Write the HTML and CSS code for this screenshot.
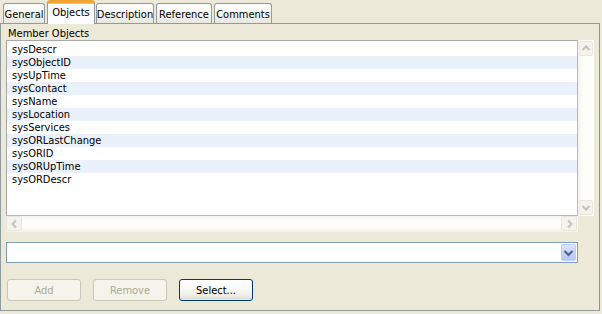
FILE: index.html
```html
<!DOCTYPE html>
<html>
<head>
<meta charset="utf-8">
<link rel="stylesheet" href="styles.css">
</head>
<body>
<div class="tabs">
  <div class="tab t-general">General</div>
  <div class="tab selected t-objects">Objects</div>
  <div class="tab t-desc">Description</div>
  <div class="tab t-ref">Reference</div>
  <div class="tab t-comm">Comments</div>
</div>
<div class="panel">
  <div class="label">Member Objects</div>
  <div class="scrollpane">
    <div class="list">
      <div class="row">sysDescr</div>
      <div class="row alt">sysObjectID</div>
      <div class="row">sysUpTime</div>
      <div class="row alt">sysContact</div>
      <div class="row">sysName</div>
      <div class="row alt">sysLocation</div>
      <div class="row">sysServices</div>
      <div class="row alt">sysORLastChange</div>
      <div class="row">sysORID</div>
      <div class="row alt">sysORUpTime</div>
      <div class="row">sysORDescr</div>
    </div>
    <div class="vscroll">
      <div class="sbtn"><svg width="14" height="15" viewBox="0 0 14 15"><polyline points="3.5,9 7,5.5 10.5,9" fill="none" stroke="#c3c3bb" stroke-width="2"/></svg></div>
      <div class="sbtn"><svg width="14" height="15" viewBox="0 0 14 15"><polyline points="3.5,6 7,9.5 10.5,6" fill="none" stroke="#c3c3bb" stroke-width="2"/></svg></div>
    </div>
    <div class="hscroll">
      <div class="sbtn h"><svg width="15" height="14" viewBox="0 0 15 14"><polyline points="9,3.5 5.5,7 9,10.5" fill="none" stroke="#c3c3bb" stroke-width="2"/></svg></div>
      <div class="sbtn h"><svg width="15" height="14" viewBox="0 0 15 14"><polyline points="6,3.5 9.5,7 6,10.5" fill="none" stroke="#c3c3bb" stroke-width="2"/></svg></div>
    </div>
    <div class="corner"></div>
  </div>
  <div class="combo">
    <div class="combo-field"></div>
    <div class="combo-btn"><svg width="15" height="19" viewBox="0 0 15 19"><polyline points="3.5,8 7.5,12 11.5,8" fill="none" stroke="#4d6185" stroke-width="2"/></svg></div>
  </div>
  <div class="buttons">
    <div class="btn disabled">Add</div>
    <div class="btn disabled">Remove</div>
    <div class="btn default">Select...</div>
  </div>
</div>
</body>
</html>
```

FILE: styles.css
```css
html, body {
  margin: 0;
  padding: 0;
}
body {
  width: 602px;
  height: 314px;
  background: #ece9d8;
  font-family: "DejaVu Sans Condensed", "Liberation Sans", sans-serif;
  font-size: 11px;
  color: #000;
  overflow: hidden;
}
.tabs {
  display: flex;
  align-items: flex-end;
  height: 23px;
  padding-left: 3px;
  gap: 2px;
  position: relative;
  z-index: 2;
}
.tab {
  box-sizing: border-box;
  height: 20px;
  border: 1px solid #919b9c;
  border-bottom: none;
  border-radius: 3px 3px 0 0;
  background: linear-gradient(#ffffff, #f3f3ef 60%, #e7e6df);
  display: flex;
  align-items: center;
  justify-content: center;
  padding-top: 1px;
}
.t-general { width: 42px; }
.t-objects { width: 48px; }
.t-desc { width: 58px; }
.t-ref { width: 56px; }
.t-comm { width: 58px; }
.tab.selected {
  height: 24px;
  margin-bottom: -1px;
  margin-right: -1px;
  background: #fcfcfe;
  border-top: 3px solid #f1a531;
  box-shadow: inset 0 1px 0 #ffc83c;
  padding-top: 0;
  padding-bottom: 3px;
}
.panel {
  box-sizing: border-box;
  width: 600px;
  height: 288px;
  border: 1px solid #919b9c;
  border-right-color: #8a9294;
  padding: 0 5px;
  display: flex;
  flex-direction: column;
  position: relative;
  z-index: 1;
}
.label {
  height: 16px;
  line-height: 14px;
  padding-left: 2px;
  padding-top: 3px;
  box-sizing: border-box;
}
.scrollpane {
  display: grid;
  grid-template-columns: 572px 16px;
  grid-template-rows: 176px 16px;
}
.list {
  box-sizing: border-box;
  border: 1px solid #a7a6aa;
  border-color: #a7a6aa #b8b8b0 #b8b8b0 #a7a6aa;
  background: #fff;
  padding-top: 2px;
}
.row {
  height: 13px;
  line-height: 13px;
  padding-left: 5px;
}
.row.alt {
  background: #ebf1fb;
}
.vscroll {
  background: linear-gradient(90deg, #f4f3ee, #fdfdfa 30%, #fefefd);
  display: flex;
  flex-direction: column;
  justify-content: space-between;
  padding: 1px;
}
.hscroll {
  background: linear-gradient(#f4f3ee, #fdfdfa 30%, #fefefd 60%, #f3f2ec);
  display: flex;
  justify-content: space-between;
  padding: 0 1px 0 0;
}
.sbtn {
  box-sizing: border-box;
  width: 14px;
  height: 15px;
  border: 1px solid #e8e6de;
  border-radius: 2px;
  background: #f4f3ee;
  display: flex;
  align-items: center;
  justify-content: center;
}
.sbtn svg { display: block; margin: -1px; }
.sbtn.h {
  width: 16px;
  height: 15px;
}
.corner {
  background: #ece9d8;
}
.combo {
  margin-top: 10px;
  width: 572px;
  height: 21px;
  box-sizing: border-box;
  border: 1px solid #7f9db9;
  background: #fff;
  display: flex;
  justify-content: flex-end;
  padding: 1px;
}
.combo-btn {
  width: 15px;
  height: 17px;
  box-sizing: border-box;
  border: 1px solid #bccdf7;
  border-radius: 2px;
  background: linear-gradient(#dce6fd, #c5d5fa 50%, #b4c8f6);
  display: flex;
  align-items: center;
  justify-content: center;
}
.combo-btn svg { display: block; margin: -1px; }
.buttons {
  margin-top: 16px;
  display: flex;
  gap: 12px;
  padding-left: 1px;
}
.btn {
  box-sizing: border-box;
  width: 74px;
  height: 22px;
  border-radius: 3px;
  display: flex;
  align-items: center;
  justify-content: center;
}
.btn.disabled {
  border: 1px solid #c9c7ba;
  background: #f5f4ea;
  color: #aca899;
}
.btn.default {
  border: 1px solid #003c74;
  background: linear-gradient(#ffffff, #f7f7f3 50%, #ebeae1 85%, #d9d6cb);
  box-shadow: inset 0 -1px 0 #cee7ff, inset 0 1px 0 #ffffff;
}
```
